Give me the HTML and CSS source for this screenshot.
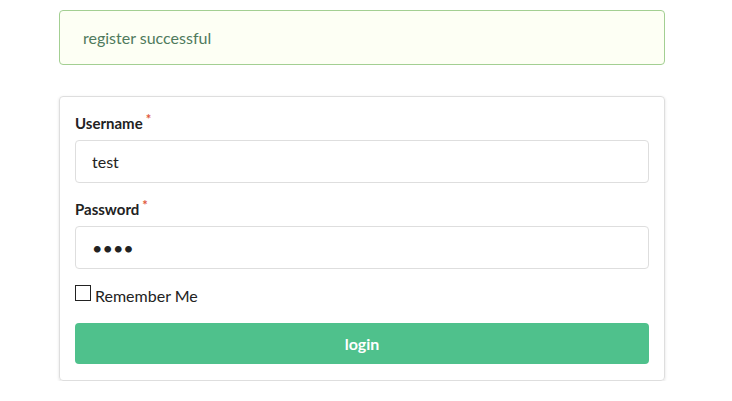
FILE: index.html
```html
<!DOCTYPE html>
<html lang="en">
<head>
<meta charset="utf-8">
<title>Login</title>
<link rel="stylesheet" href="styles.css">
</head>
<body>
<main class="page">
  <div class="alert">register successful</div>
  <form class="card">
    <div class="field">
      <label class="label" for="username">Username<sup class="req">*</sup></label>
      <input class="input" id="username" type="text" value="test">
    </div>
    <div class="field">
      <label class="label" for="password">Password<sup class="req">*</sup></label>
      <input class="input pw" id="password" type="password" value="test">
    </div>
    <label class="remember"><input class="check" type="checkbox"><span>Remember Me</span></label>
    <button class="btn" type="button">login</button>
  </form>
</main>
</body>
</html>
```

FILE: styles.css
```css
* { box-sizing: border-box; }
html, body { margin: 0; padding: 0; background: #fff; }
body {
  font-family: Lato, "Open Sans", "Liberation Sans", sans-serif;
  color: #222;
}
.page {
  width: 606px;
  margin-left: 59px;
  padding-top: 10px;
  display: flex;
  flex-direction: column;
  gap: 31px;
}
.alert {
  border: 1px solid #a3cf92;
  background: #fdfff4;
  border-radius: 4px;
  color: #4f7a5c;
  font-size: 16px;
  line-height: 21px;
  padding: 16px 23px;
}
.card {
  border: 1px solid #dedede;
  border-radius: 4px;
  box-shadow: 0 1px 3px rgba(0,0,0,0.13);
  padding: 16px 15px 16px;
  display: flex;
  flex-direction: column;
  margin: 0;
}
.field {
  display: flex;
  flex-direction: column;
  gap: 7px;
  margin-bottom: 16px;
}
.label {
  font-weight: 700;
  font-size: 15px;
  line-height: 20px;
  color: #222;
}
.req {
  color: #e0573a;
  font-size: 13px;
  margin-left: 3px;
  vertical-align: 5px;
  line-height: 0;
  font-weight: 700;
}
.input {
  height: 43px;
  width: 100%;
  border: 1px solid #dedede;
  border-radius: 4px;
  padding: 0 16px;
  font-family: inherit;
  font-size: 16px;
  color: #222;
  outline: none;
}
.pw {
  font-size: 18px;
  letter-spacing: 0;
}
.remember {
  display: flex;
  align-items: flex-start;
  gap: 4px;
  font-size: 16px;
  line-height: 22px;
  color: #222;
  margin-bottom: 16px;
}
.check {
  appearance: none;
  -webkit-appearance: none;
  width: 16px;
  height: 16px;
  margin: 0;
  border: 1px solid #222;
  background: #fff;
}
.btn {
  height: 41px;
  width: 100%;
  border: none;
  border-radius: 4px;
  background: #4fc18c;
  color: #fff;
  font-family: inherit;
  font-weight: 700;
  font-size: 16px;
}
```
